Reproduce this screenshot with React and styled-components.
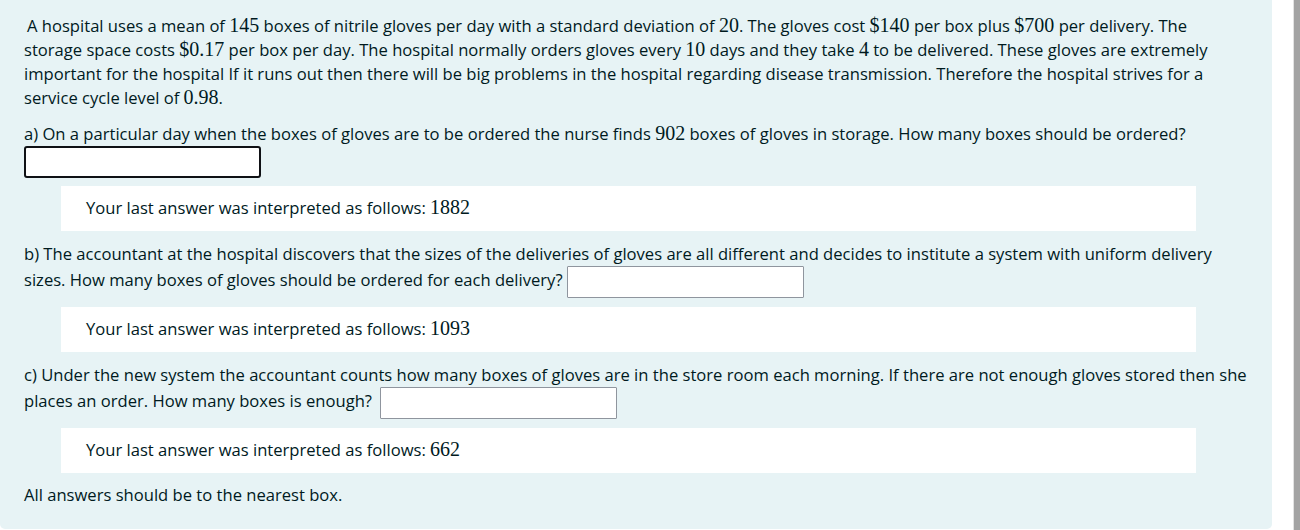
import React from "react";
import styled, { createGlobalStyle } from "styled-components";

const Global = createGlobalStyle`
  html, body { margin: 0; padding: 0; background: #ffffff; }
  body { font-family: "Open Sans", "Noto Sans", sans-serif; }
`;

const Page = styled.div`
  display: flex;
  height: 530px;
  overflow: hidden;
`;

const Panel = styled.div`
  flex: 0 0 1272px;
  box-sizing: border-box;
  height: 529px;
  background: #e7f3f5;
  border-radius: 0 0 5px 5px;
  padding: 14px 25px 0 24px;
  color: #001a1e;
  font-family: "Open Sans", "Noto Sans", sans-serif;
  font-size: 16.6px;
  line-height: 24px;
`;

const Spacer = styled.div`
  flex: 1;
`;

const Scrollbar = styled.div`
  flex: 0 0 6px;
  background: #a3a3a3;
  border-left: 1px solid #e2e2e2;
`;

const Para = styled.p`
  margin: 0 0 ${(p) => p.$gap}px 0;
`;

const M = styled.span`
  font-family: "Liberation Serif", "DejaVu Serif", serif;
  font-size: 20px;
  line-height: 0;
`;

const Answer = styled.input`
  box-sizing: border-box;
  width: 237px;
  height: 32px;
  vertical-align: middle;
  background: #ffffff;
  border: ${(p) => (p.$active ? "2px solid #0f1115" : "1px solid #8f959e")};
  border-radius: ${(p) => (p.$active ? "3px" : "1px")};
  margin: ${(p) => (p.$block ? "0" : "0 0 0 4px")};
  padding: 0 8px;
  font: inherit;
  outline: none;
`;

const Feedback = styled.div`
  background: #ffffff;
  margin: 0 51px ${(p) => p.$gap}px 37px;
  padding: 10px 25px 11px;
`;

const Lead = styled.span`
  padding-left: 3px;
`;

export default function App() {
  return (
    <>
      <Global />
      <Page>
        <Panel>
          <Para $gap={12}>
            <Lead>A hospital uses a mean of </Lead>
            <M>145</M> boxes of nitrile gloves per day with a standard deviation of <M>20</M>. The gloves cost <M>$140</M> per box plus <M>$700</M> per delivery. The storage space costs <M>$0.17</M> per box per day. The hospital normally orders gloves every <M>10</M> days and they take <M>4</M> to be delivered. These gloves are extremely important for the hospital If it runs out then there will be big problems in the hospital regarding disease transmission. Therefore the hospital strives for a service cycle level of <M>0.98</M>.
          </Para>
          <Para $gap={8}>
            a) On a particular day when the boxes of gloves are to be ordered the nurse finds <M>902</M> boxes of gloves in storage. How many boxes should be ordered?
            <br />
            <Answer $active $block aria-label="answer a" />
          </Para>
          <Feedback $gap={11}>
            Your last answer was interpreted as follows: <M>1882</M>
          </Feedback>
          <Para $gap={9}>
            b) The accountant at the hospital discovers that the sizes of the deliveries of gloves are all different and decides to institute a system with uniform delivery sizes. How many boxes of gloves should be ordered for each delivery?
            <Answer aria-label="answer b" />
          </Para>
          <Feedback $gap={11}>
            Your last answer was interpreted as follows: <M>1093</M>
          </Feedback>
          <Para $gap={9}>
            c) Under the new system the accountant counts how many boxes of gloves are in the store room each morning. If there are not enough gloves stored then she places an order. How many boxes is enough?{" "}
            <Answer aria-label="answer c" />
          </Para>
          <Feedback $gap={10}>
            Your last answer was interpreted as follows: <M>662</M>
          </Feedback>
          <Para $gap={0}>All answers should be to the nearest box.</Para>
        </Panel>
        <Spacer />
        <Scrollbar />
      </Page>
    </>
  );
}
